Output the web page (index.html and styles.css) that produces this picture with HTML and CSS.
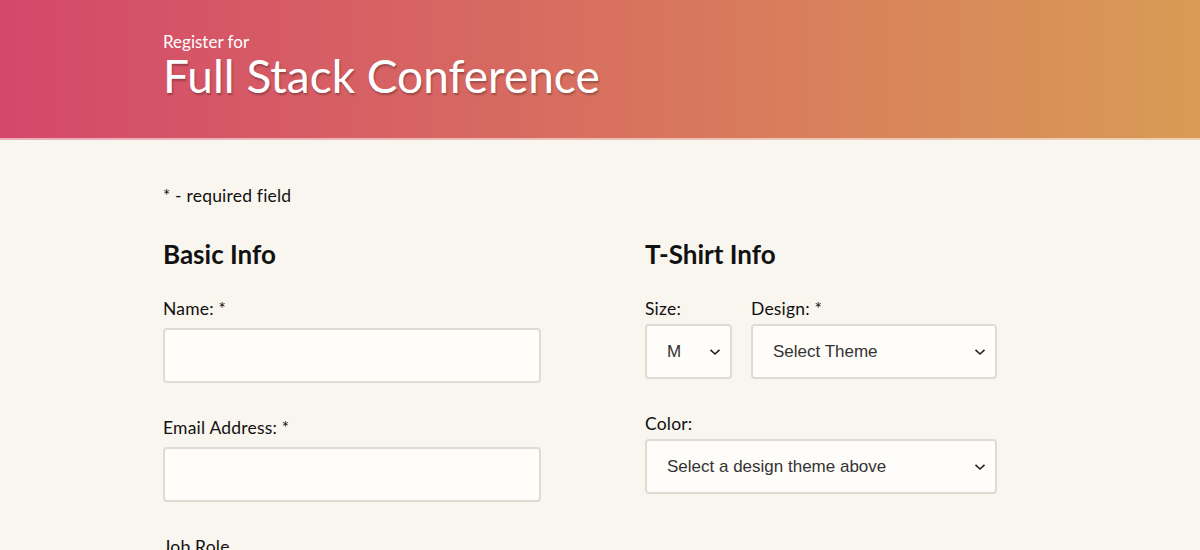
FILE: index.html
```html
<!DOCTYPE html>
<html lang="en">
<head>
<meta charset="utf-8">
<title>Full Stack Conference Registration</title>
<link rel="stylesheet" href="styles.css">
</head>
<body>
<header class="hero">
  <div class="hero-inner">
    <p class="hero-kicker">Register for</p>
    <h1 class="hero-title">Full Stack Conference</h1>
  </div>
</header>
<main class="page">
  <p class="note"><span class="req">*</span> - required field</p>
  <form class="form">
    <section class="col col-basic">
      <h2 class="section-title">Basic Info</h2>
      <div class="field">
        <label class="label" for="name">Name: <span class="req">*</span></label>
        <input class="input" id="name" type="text">
      </div>
      <div class="field">
        <label class="label" for="email">Email Address: <span class="req">*</span></label>
        <input class="input" id="email" type="email">
      </div>
      <div class="field">
        <label class="label" for="title">Job Role</label>
      </div>
    </section>
    <section class="col col-shirt">
      <h2 class="section-title">T-Shirt Info</h2>
      <div class="row">
        <div class="field field-size">
          <label class="label" for="size">Size:</label>
          <select class="select" id="size"><option>M</option></select>
        </div>
        <div class="field field-design">
          <label class="label" for="design">Design: *</label>
          <select class="select" id="design"><option>Select Theme</option></select>
        </div>
      </div>
      <div class="field">
        <label class="label" for="color">Color:</label>
        <select class="select" id="color"><option>Select a design theme above</option></select>
      </div>
    </section>
  </form>
</main>
</body>
</html>
```

FILE: styles.css
```css
* { box-sizing: border-box; }

html, body {
  margin: 0;
  padding: 0;
}

body {
  background: #f9f5ef;
  font-family: "Lato", "Noto Sans", sans-serif;
  color: #111;
}

.hero {
  height: 140px;
  background:
    linear-gradient(to top, rgba(255,255,255,0.55) 2px, transparent 2px),
    linear-gradient(to right, #d4486a 0%, #d8705f 50%, #d99b55 100%);
}

.hero-inner {
  padding: 32px 0 0 163px;
}

.hero-kicker {
  margin: 0;
  font-size: 17px;
  line-height: 20px;
  color: #fff;
}

.hero-title {
  margin: 0;
  font-size: 46px;
  line-height: 48px;
  font-weight: 400;
  color: #fff;
  text-shadow: 1px 2px 2px rgba(0,0,0,0.28);
}

.page {
  padding: 45px 0 0 163px;
}

.note {
  margin: 0;
  font-size: 17.5px;
  line-height: 22px;
  letter-spacing: 0.2px;
}

.req {
  font-size: 17px;
}

.form {
  display: flex;
  gap: 104px;
  margin-top: 32px;
}

.col-basic { width: 378px; }
.col-shirt { width: 352px; }

.section-title {
  margin: 0 0 29px;
  font-size: 26px;
  line-height: 30px;
  font-weight: 700;
}

.field {
  display: flex;
  flex-direction: column;
}

.label {
  font-size: 17.5px;
  line-height: 22px;
  letter-spacing: 0.2px;
  margin-bottom: 8px;
}

.input {
  width: 100%;
  height: 55px;
  margin-bottom: 34px;
  border: 2px solid #dedad4;
  border-radius: 4px;
  background: #fffdf9;
  font: inherit;
}

.row {
  display: flex;
  gap: 19px;
}

.col-shirt .label { margin-bottom: 4px; }

.select {
  -webkit-appearance: none;
  appearance: none;
  width: 100%;
  height: 55px;
  margin-bottom: 34px;
  padding: 0 30px 0 20px;
  border: 2px solid #dedad4;
  border-radius: 4px;
  background-color: #fffdf9;
  background-image: url("data:image/svg+xml;utf8,<svg xmlns='http://www.w3.org/2000/svg' width='12' height='8' viewBox='0 0 12 8'><path d='M1.5 1.8 L6 6 L10.5 1.8' fill='none' stroke='%23222' stroke-width='1.6'/></svg>");
  background-repeat: no-repeat;
  background-position: right 9px center;
  font-family: "Liberation Sans", Arial, sans-serif;
  font-size: 17px;
  color: #333;
}

.field-size { width: 87px; }
.field-design { flex: 1; }
```
